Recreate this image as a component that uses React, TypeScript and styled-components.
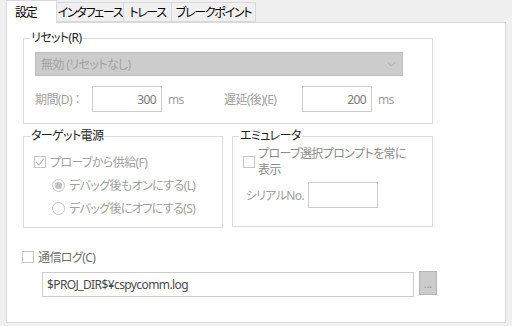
import styled, { createGlobalStyle } from 'styled-components';

const GlobalStyle = createGlobalStyle`
  body {
    margin: 0;
    background: #f0f0f0;
    font-family: "Noto Sans", "Noto Sans CJK JP", sans-serif;
    font-size: 12px;
    letter-spacing: -0.6px;
    font-feature-settings: "palt";
    color: #1e1e1e;
  }
`

const Page = styled.div`
  width: 512px;
  height: 326px;
  padding: 0 6px 3px 6px;
  box-sizing: border-box;
  display: flex;
  flex-direction: column;
`

const TabBar = styled.div`
  display: flex;
  align-items: flex-end;
  height: 22px;
  flex-shrink: 0;
`

const Tab = styled.div<{ $w: number; $active?: boolean }>`
  position: relative;
  z-index: ${p => (p.$active ? 2 : 1)};
  box-sizing: border-box;
  width: ${p => p.$w}px;
  height: ${p => (p.$active ? 23 : 20)}px;
  margin-bottom: ${p => (p.$active ? -1 : 0)}px;
  margin-left: -1px;
  display: flex;
  align-items: center;
  justify-content: ${p => (p.$active ? 'flex-start' : 'center')};
  padding: ${p => (p.$active ? '0 0 1px 8px' : '0')};
  background: ${p => (p.$active ? '#ffffff' : '#f0f0f0')};
  border: 1px solid #d9d9d9;
  border-bottom: ${p => (p.$active ? 'none' : '1px solid #d9d9d9')};
  color: #000;
  letter-spacing: -1.3px;
  white-space: nowrap;
  &:first-child { margin-left: 0; }
`

const Panel = styled.div`
  flex: 1;
  background: #fff;
  border: 1px solid #d9d9d9;
  padding: 8px 0 0 16px;
  display: flex;
  flex-direction: column;
`

const Group = styled.fieldset<{ $w: number }>`
  margin: 0;
  padding: 0;
  min-width: 0;
  width: ${p => p.$w}px;
  box-sizing: border-box;
  border: 1px solid #dcdcdc;
`

const Legend = styled.legend`
  margin-left: 6px;
  padding: 0 1px;
  line-height: 14px;
  color: #1e1e1e;
`

const GroupBody = styled.div<{ $pad: string }>`
  padding: ${p => p.$pad};
  display: flex;
  flex-direction: column;
`

const Select = styled.div`
  height: 24px;
  box-sizing: border-box;
  width: 368px;
  background: #cccccc;
  border: 1px solid #bfbfbf;
  display: flex;
  align-items: center;
  justify-content: space-between;
  padding: 0 6px 0 5px;
  color: #a3a3a3;
`

const Row = styled.div<{ $gap?: number; $top?: number; $align?: string }>`
  display: flex;
  align-items: ${p => p.$align ?? 'center'};
  gap: ${p => p.$gap ?? 0}px;
  margin-top: ${p => p.$top ?? 0}px;
`

const FieldLabel = styled.span<{ $w: number }>`
  width: ${p => p.$w}px;
  flex-shrink: 0;
  color: #a0a0a0;
  white-space: nowrap;
`

const NumInput = styled.div<{ $w: number }>`
  width: ${p => p.$w}px;
  height: 26px;
  box-sizing: border-box;
  border: 1px solid #cccccc;
  background: #fff;
  display: flex;
  align-items: center;
  justify-content: flex-end;
  padding-right: 5px;
  color: #7a7a7a;
  flex-shrink: 0;
`

const Unit = styled.span<{ $w: number }>`
  width: ${p => p.$w}px;
  flex-shrink: 0;
  padding-left: 6px;
  box-sizing: border-box;
  color: #a0a0a0;
`

const Box = styled.span`
  width: 12px;
  height: 12px;
  box-sizing: border-box;
  border: 1px solid #c6c6c6;
  background: #fff;
  flex-shrink: 0;
  display: flex;
  align-items: center;
  justify-content: center;
`

const Circle = styled.span`
  width: 13px;
  height: 13px;
  box-sizing: border-box;
  border: 1px solid #c6c6c6;
  border-radius: 50%;
  background: #fff;
  flex-shrink: 0;
  display: flex;
  align-items: center;
  justify-content: center;
`

const Dot = styled.span`
  width: 7px;
  height: 7px;
  border-radius: 50%;
  background: #c2c2c2;
`

const OptionRow = styled.div<{ $indent?: number; $top?: number; $color?: string }>`
  display: flex;
  align-items: center;
  gap: 4px;
  height: 16px;
  padding-left: ${p => p.$indent ?? 0}px;
  margin-top: ${p => p.$top ?? 0}px;
  color: ${p => p.$color ?? '#a0a0a0'};
  white-space: nowrap;
`

const WrapRow = styled.div`
  display: flex;
  align-items: center;
  gap: 3px;
`

const WrapText = styled.span`
  line-height: 16px;
  color: #8c8c8c;
`

const LogRow = styled(OptionRow)`
  margin-left: -1px;
`

const PathRow = styled.div`
  display: flex;
  align-items: flex-start;
  gap: 5px;
  margin-top: 6px;
  padding-left: 19px;
`

const PathInput = styled.div`
  width: 372px;
  height: 25px;
  margin-top: 1px;
  box-sizing: border-box;
  border: 1px solid #cccccc;
  display: flex;
  align-items: center;
  padding-left: 4px;
  color: #4a4a4a;
  white-space: nowrap;
`

const BrowseButton = styled.div`
  width: 18px;
  height: 24px;
  box-sizing: border-box;
  background: #cccccc;
  border: 1px solid #b5b5b5;
  display: flex;
  align-items: center;
  justify-content: center;
  color: #8a8a9a;
  font-size: 10px;
  letter-spacing: 0;
  padding-top: 2px;
`

const Check = () => (
  <svg width="10" height="10" viewBox="0 0 10 10">
    <polyline points="1,5 4,8 9,1.5" fill="none" stroke="#b8b8b8" strokeWidth="1.1" />
  </svg>
)

const Chevron = () => (
  <svg width="9" height="6" viewBox="0 0 9 6">
    <polyline points="0.5,1 4.5,5 8.5,1" fill="none" stroke="#a8a8a8" strokeWidth="1" />
  </svg>
)

const App: React.FC = () => {
  return (
    <Page>
      <GlobalStyle />
      <TabBar>
        <Tab $w={51} $active>設定</Tab>
        <Tab $w={68}>インタフェース</Tab>
        <Tab $w={49}>トレース</Tab>
        <Tab $w={85}>ブレークポイント</Tab>
      </TabBar>
      <Panel>
        <Group $w={410}>
          <Legend>リセット(R)</Legend>
          <GroupBody $pad="7px 0 11px 11px">
            <Select>
              <span>無効 (リセットなし)</span>
              <Chevron />
            </Select>
            <Row $top={10}>
              <FieldLabel $w={57}>期間(D) ：</FieldLabel>
              <NumInput $w={70}>300</NumInput>
              <Unit $w={62}>ms</Unit>
              <FieldLabel $w={78}>遅延(後)(E)</FieldLabel>
              <NumInput $w={70}>200</NumInput>
              <Unit $w={30}>ms</Unit>
            </Row>
          </GroupBody>
        </Group>

        <Row $top={5} $gap={9} $align="flex-start">
          <Group $w={200}>
            <Legend>ターゲット電源</Legend>
            <GroupBody $pad="11px 0 11px 10px">
              <OptionRow>
                <Box><Check /></Box>
                プローブから供給(F)
              </OptionRow>
              <OptionRow $indent={18} $top={7}>
                <Circle><Dot /></Circle>
                デバッグ後もオンにする(L)
              </OptionRow>
              <OptionRow $indent={18} $top={7}>
                <Circle />
                デバッグ後にオフにする(S)
              </OptionRow>
            </GroupBody>
          </Group>
          <Group $w={201}>
            <Legend>エミュレータ</Legend>
            <GroupBody $pad="3px 0 18px 10px">
              <WrapRow>
                <Box />
                <WrapText>プローブ選択プロンプトを常に<br />表示</WrapText>
              </WrapRow>
              <Row $top={4}>
                <FieldLabel $w={65}>&nbsp;シリアルNo.</FieldLabel>
                <NumInput $w={70} />
              </Row>
            </GroupBody>
          </Group>
        </Row>

        <LogRow $top={21} $color="#6e6e6e">
          <Box />
          通信ログ(C)
        </LogRow>
        <PathRow>
          <PathInput>$PROJ_DIR$¥cspycomm.log</PathInput>
          <BrowseButton>...</BrowseButton>
        </PathRow>
      </Panel>
    </Page>
  );
}

export default App;
